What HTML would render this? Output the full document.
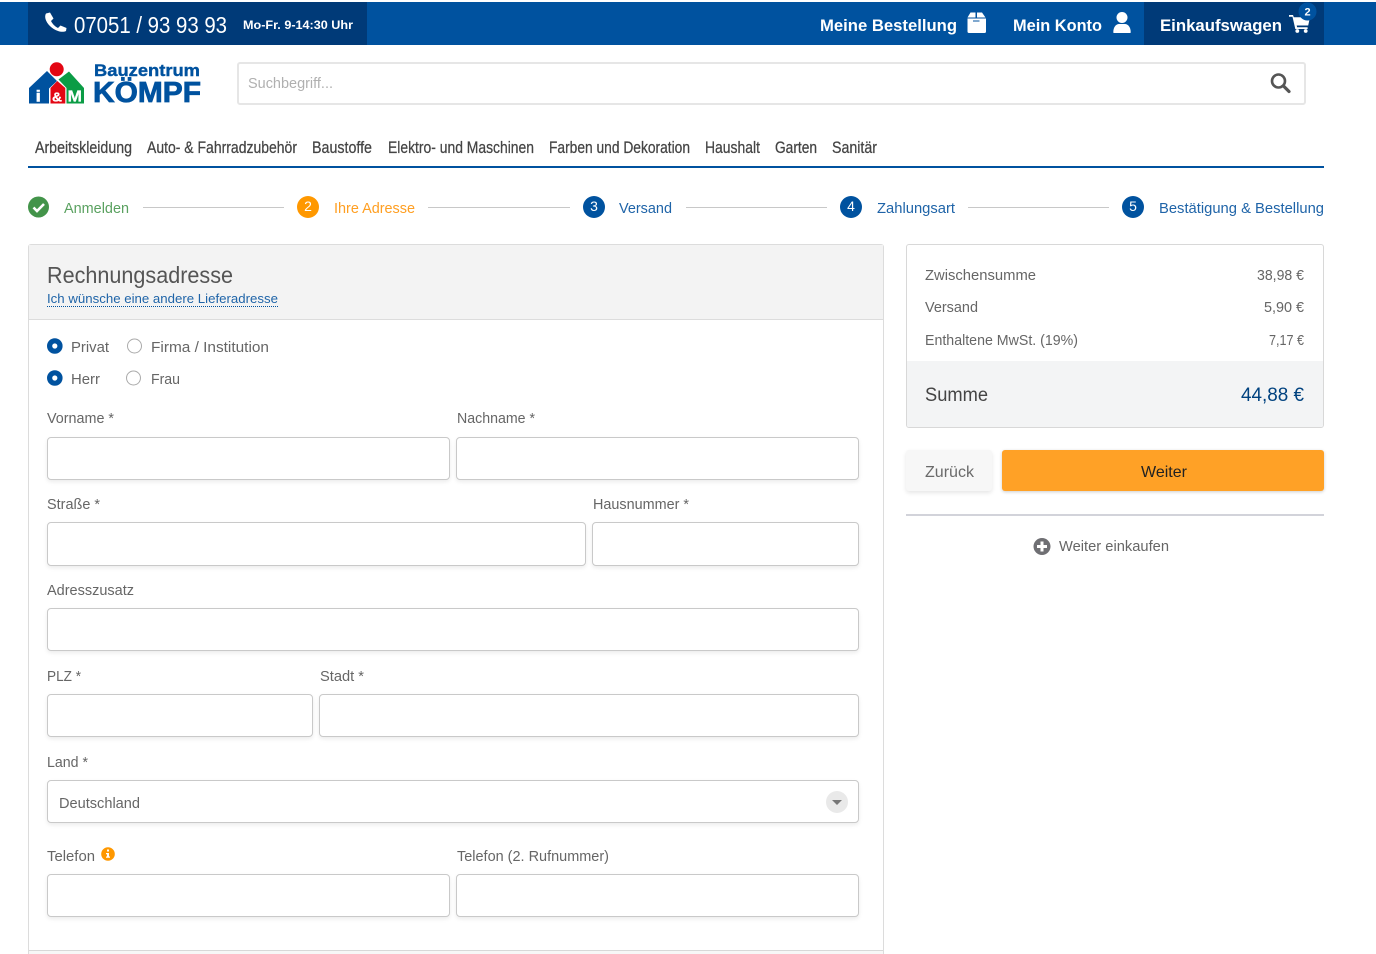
<!DOCTYPE html>
<html lang="de"><head><meta charset="utf-8"><title>Rechnungsadresse</title>
<style>
html,body{margin:0;padding:0;background:#fff;width:1376px;height:954px;overflow:hidden;font-family:"Liberation Sans",sans-serif}
body{position:relative}
.b{position:absolute;box-sizing:border-box}
input.b{border:1px solid #c9c9c9;border-radius:4px;background:#fff;box-shadow:0 2px 4px rgba(0,0,0,.08);outline:0;padding:0}
svg{position:absolute;left:0;top:0}
text{font-family:"Liberation Sans",sans-serif;font-size:15px;fill:#666}
.n{font-size:17px;fill:#444;stroke:#444;stroke-width:.25}
.w{fill:#fff;font-weight:700;font-size:17px}
.d{font-size:14px;fill:#fff;text-anchor:middle}
</style></head><body>
<div class="b" style="left:0;top:2px;width:1376px;height:43px;background:#00529f"></div>
<div class="b" style="left:28px;top:2px;width:339px;height:43px;background:#003a78"></div>
<div class="b" style="left:1144px;top:2px;width:180px;height:43px;background:#003a78"></div>
<div class="b" style="left:237px;top:62px;width:1069px;height:43px;border:2px solid #e6e6e6;border-radius:3px"></div>
<div class="b" style="left:28px;top:166px;width:1296px;height:2px;background:#00529f"></div>

<div class="b" style="left:28px;top:244px;width:856px;height:720px;border:1px solid #dcdcdc;border-radius:3px"></div>
<div class="b" style="left:29px;top:245px;width:854px;height:75px;background:#f3f3f3;border-bottom:1px solid #dcdcdc"></div>
<div class="b" style="left:29px;top:950px;width:854px;height:4px;background:#f7f7f7;border-top:1px solid #d8d8d8"></div>

<input class="b" style="left:47px;top:437px;width:403px;height:43px">
<input class="b" style="left:456px;top:437px;width:403px;height:43px">
<input class="b" style="left:47px;top:522px;width:539px;height:44px">
<input class="b" style="left:592px;top:522px;width:267px;height:44px">
<input class="b" style="left:47px;top:608px;width:812px;height:43px">
<input class="b" style="left:47px;top:694px;width:266px;height:43px">
<input class="b" style="left:319px;top:694px;width:540px;height:43px">
<input class="b" style="left:47px;top:780px;width:812px;height:43px">
<input class="b" style="left:47px;top:874px;width:403px;height:43px">
<input class="b" style="left:456px;top:874px;width:403px;height:43px">

<div class="b" style="left:906px;top:244px;width:418px;height:184px;border:1px solid #d8d8d8;border-radius:3px;overflow:hidden"><div class="b" style="left:0;top:116px;width:416px;height:66px;background:#f3f4f5"></div></div>
<div class="b" style="left:906px;top:450px;width:86px;height:41px;background:#f7f7f7;border-radius:3px;box-shadow:0 2px 4px rgba(0,0,0,.1)"></div>
<div class="b" style="left:1002px;top:450px;width:322px;height:41px;background:#ffa126;border-radius:3px;box-shadow:0 1px 3px rgba(0,0,0,.2)"></div>
<div class="b" style="left:906px;top:514px;width:418px;height:2px;background:#d2d3da"></div>

<svg width="1376" height="954" viewBox="0 0 1376 954">
<!-- top bar -->
<path fill="#fff" d="M46 13.500L50 12.500L53.500 18.500L51 21C52.500 24 55 26.500 58 28L60.500 25.500L66.500 28L66 31C64 32 61 32 58 31C52 29 47 24 45.500 19C45 17 45 15 46 13.500Z"/>
<text x="74" y="33" textLength="153" lengthAdjust="spacingAndGlyphs" style="font-size:23px;fill:#fff">07051 / 93 93 93</text>
<text x="243" y="29" textLength="110" lengthAdjust="spacingAndGlyphs" style="font-size:12px;fill:#fff;font-weight:700">Mo-Fr. 9-14:30 Uhr</text>
<text class="w" x="820" y="31" textLength="137" lengthAdjust="spacingAndGlyphs">Meine Bestellung</text>
<path fill="#fff" fill-rule="evenodd" d="M967.500 18.500h18.500v13q0 1.500-1.500 1.500h-15.500q-1.500 0-1.500-1.500zM973 20.500v1h6.500v-1zM967.500 17.500l3-5h5v5zM977 12.500h5l3.500 5h-8.500z"/>
<text class="w" x="1013" y="31" textLength="89" lengthAdjust="spacingAndGlyphs">Mein Konto</text>
<circle cx="1122" cy="17.500" r="5.500" fill="#fff"/><path fill="#fff" d="M1114 33q-.7 0-.7-.8c0-5 2.700-8.200 5.700-8.200h6c3 0 5.700 3.200 5.700 8.200q0 .8-.7 .8z"/>
<text class="w" x="1160" y="31" textLength="122" lengthAdjust="spacingAndGlyphs">Einkaufswagen</text>
<path fill="#fff" d="M1289 15h4l.8 2.200h16.200l-1.800 8.300h-11.500l.4 1.800h10.500v1.700h-12.300l-2.800-12.300h-3.500z"/><circle cx="1297.300" cy="31" r="1.900" fill="#fff"/><circle cx="1305.700" cy="31" r="1.900" fill="#fff"/>
<circle cx="1307.500" cy="11.500" r="9" fill="#00529f"/><text x="1307.500" y="15.500" text-anchor="middle" style="font-size:11px;font-weight:700;fill:#fff">2</text>

<!-- logo -->
<path fill="#00529f" d="M29 88L47 71L57 81L49 88.500V103.500H29z"/>
<path fill="#0b9c45" d="M58.500 79.500L69 71.500L84 88V103.500H66.500V88z"/>
<path fill="#e30613" d="M50.500 88L57.300 81L65.300 88V103.500H50.500z"/>
<circle cx="56.700" cy="69.300" r="7" fill="#e30613"/>
<text x="35.500" y="101.500" textLength="5.500" lengthAdjust="spacingAndGlyphs" style="font-size:16px;font-weight:700;fill:#fff;stroke:#fff;stroke-width:.4">i</text>
<text x="52" y="101.500" textLength="10" lengthAdjust="spacingAndGlyphs" style="font-size:13px;font-weight:700;fill:#fff;stroke:#fff;stroke-width:.3">&amp;</text>
<text x="67.500" y="101.500" textLength="14.500" lengthAdjust="spacingAndGlyphs" style="font-size:15.500px;font-weight:700;fill:#fff;stroke:#fff;stroke-width:.3">M</text>
<text x="94" y="76" textLength="106" lengthAdjust="spacingAndGlyphs" style="font-size:17px;font-weight:700;fill:#00529f;stroke:#00529f;stroke-width:.4">Bauzentrum</text>
<text x="93" y="102" textLength="108" lengthAdjust="spacingAndGlyphs" style="font-size:29px;font-weight:700;fill:#00529f;stroke:#00529f;stroke-width:.8">KÖMPF</text>

<!-- search -->
<text x="248" y="88" textLength="85" lengthAdjust="spacingAndGlyphs" style="fill:#b0b0b0">Suchbegriff...</text>
<circle cx="1278.500" cy="81" r="6.500" fill="none" stroke="#555" stroke-width="2.600"/><path d="M1283.500 86l5.500 5.500" stroke="#555" stroke-width="3.200" stroke-linecap="round"/>

<!-- nav -->
<text class="n" x="35" y="153" textLength="97" lengthAdjust="spacingAndGlyphs">Arbeitskleidung</text>
<text class="n" x="147" y="153" textLength="150" lengthAdjust="spacingAndGlyphs">Auto- &amp; Fahrradzubehör</text>
<text class="n" x="312" y="153" textLength="60" lengthAdjust="spacingAndGlyphs">Baustoffe</text>
<text class="n" x="388" y="153" textLength="146" lengthAdjust="spacingAndGlyphs">Elektro- und Maschinen</text>
<text class="n" x="549" y="153" textLength="141" lengthAdjust="spacingAndGlyphs">Farben und Dekoration</text>
<text class="n" x="705" y="153" textLength="55" lengthAdjust="spacingAndGlyphs">Haushalt</text>
<text class="n" x="775" y="153" textLength="42" lengthAdjust="spacingAndGlyphs">Garten</text>
<text class="n" x="832" y="153" textLength="45" lengthAdjust="spacingAndGlyphs">Sanitär</text>

<!-- steps -->
<g stroke="#c8c8c8" stroke-width="1"><path d="M143 207.500H284M428 207.500H570M686 207.500H827M968 207.500H1109"/></g>
<circle cx="38.500" cy="207" r="10.500" fill="#43944a"/><path d="M33.500 207.500l3.500 3.500l7-7" fill="none" stroke="#fff" stroke-width="2.600"/>
<text x="64" y="213" textLength="65" lengthAdjust="spacingAndGlyphs" style="fill:#5aa160">Anmelden</text>
<circle cx="308" cy="207" r="11" fill="#ff9800"/><text class="d" x="308" y="211">2</text>
<text x="334" y="213" textLength="81" lengthAdjust="spacingAndGlyphs" style="fill:#ff9f22">Ihre Adresse</text>
<circle cx="594" cy="207" r="11" fill="#00529f"/><text class="d" x="594" y="211">3</text>
<text x="619" y="213" textLength="53" lengthAdjust="spacingAndGlyphs" style="fill:#1f64a8">Versand</text>
<circle cx="851" cy="207" r="11" fill="#00529f"/><text class="d" x="851" y="211">4</text>
<text x="877" y="213" textLength="78" lengthAdjust="spacingAndGlyphs" style="fill:#1f64a8">Zahlungsart</text>
<circle cx="1133" cy="207" r="11" fill="#00529f"/><text class="d" x="1133" y="211">5</text>
<text x="1159" y="213" textLength="165" lengthAdjust="spacingAndGlyphs" style="fill:#1f64a8">Bestätigung &amp; Bestellung</text>

<!-- left panel -->
<text x="47" y="283" textLength="186" lengthAdjust="spacingAndGlyphs" style="font-size:23px;fill:#555">Rechnungsadresse</text>
<text x="47" y="303" textLength="231" lengthAdjust="spacingAndGlyphs" style="font-size:12.500px;fill:#1f64a8">Ich wünsche eine andere Lieferadresse</text>
<path d="M47 306.500H278" stroke="#00529f" stroke-dasharray="1 1" stroke-width="1"/>

<circle cx="54.800" cy="346" r="5.200" fill="#fff" stroke="#00529f" stroke-width="5.200"/>
<text x="71" y="352" textLength="38" lengthAdjust="spacingAndGlyphs">Privat</text>
<circle cx="134.500" cy="346" r="7" fill="#fff" stroke="#aaa"/>
<text x="151" y="352" textLength="118" lengthAdjust="spacingAndGlyphs">Firma / Institution</text>
<circle cx="54.800" cy="378" r="5.200" fill="#fff" stroke="#00529f" stroke-width="5.200"/>
<text x="71" y="384" textLength="29" lengthAdjust="spacingAndGlyphs">Herr</text>
<circle cx="133.500" cy="378" r="7" fill="#fff" stroke="#aaa"/>
<text x="151" y="384" textLength="29" lengthAdjust="spacingAndGlyphs">Frau</text>

<text x="47" y="423" textLength="67" lengthAdjust="spacingAndGlyphs">Vorname *</text>
<text x="457" y="423" textLength="78" lengthAdjust="spacingAndGlyphs">Nachname *</text>
<text x="47" y="509" textLength="53" lengthAdjust="spacingAndGlyphs">Straße *</text>
<text x="593" y="509" textLength="96" lengthAdjust="spacingAndGlyphs">Hausnummer *</text>
<text x="47" y="595" textLength="87" lengthAdjust="spacingAndGlyphs">Adresszusatz</text>
<text x="47" y="681" textLength="34" lengthAdjust="spacingAndGlyphs">PLZ *</text>
<text x="320" y="681" textLength="44" lengthAdjust="spacingAndGlyphs">Stadt *</text>
<text x="47" y="767" textLength="41" lengthAdjust="spacingAndGlyphs">Land *</text>
<text x="59" y="808" textLength="81" lengthAdjust="spacingAndGlyphs">Deutschland</text>
<circle cx="837" cy="802" r="11" fill="#e9e9e9"/><path d="M832 800h10l-5 5z" fill="#777"/>
<text x="47" y="861" textLength="48" lengthAdjust="spacingAndGlyphs">Telefon</text>
<circle cx="108" cy="854" r="6.800" fill="#ff9800"/><path d="M107 849.500h2v2h-2zM106 853h3v3.500h1v1.200h-4v-1.200h1v-2.300h-1z" fill="#fff"/>
<text x="457" y="861" textLength="152" lengthAdjust="spacingAndGlyphs">Telefon (2. Rufnummer)</text>

<!-- right panel -->
<text x="925" y="280" textLength="111" lengthAdjust="spacingAndGlyphs">Zwischensumme</text>
<text x="1257" y="280" textLength="47" lengthAdjust="spacingAndGlyphs">38,98 €</text>
<text x="925" y="312" textLength="53" lengthAdjust="spacingAndGlyphs">Versand</text>
<text x="1264" y="312" textLength="40" lengthAdjust="spacingAndGlyphs">5,90 €</text>
<text x="925" y="345" textLength="153" lengthAdjust="spacingAndGlyphs">Enthaltene MwSt. (19%)</text>
<text x="1269" y="345" textLength="35" lengthAdjust="spacingAndGlyphs">7,17 €</text>
<text x="925" y="401" textLength="63" lengthAdjust="spacingAndGlyphs" style="font-size:19px;fill:#444">Summe</text>
<text x="1241" y="401" textLength="63" lengthAdjust="spacingAndGlyphs" style="font-size:19px;fill:#00427f">44,88 €</text>
<text x="925" y="477" textLength="49" lengthAdjust="spacingAndGlyphs" style="font-size:16px;fill:#6a6a6a">Zurück</text>
<text x="1141" y="477" textLength="46" lengthAdjust="spacingAndGlyphs" style="font-size:16px;fill:#222">Weiter</text>
<circle cx="1042" cy="546.500" r="8.500" fill="#6f6f73"/><path d="M1037 546.500h10M1042 541.500v10" stroke="#fff" stroke-width="3"/>
<text x="1059" y="551" textLength="110" lengthAdjust="spacingAndGlyphs">Weiter einkaufen</text>
</svg>
</body></html>
